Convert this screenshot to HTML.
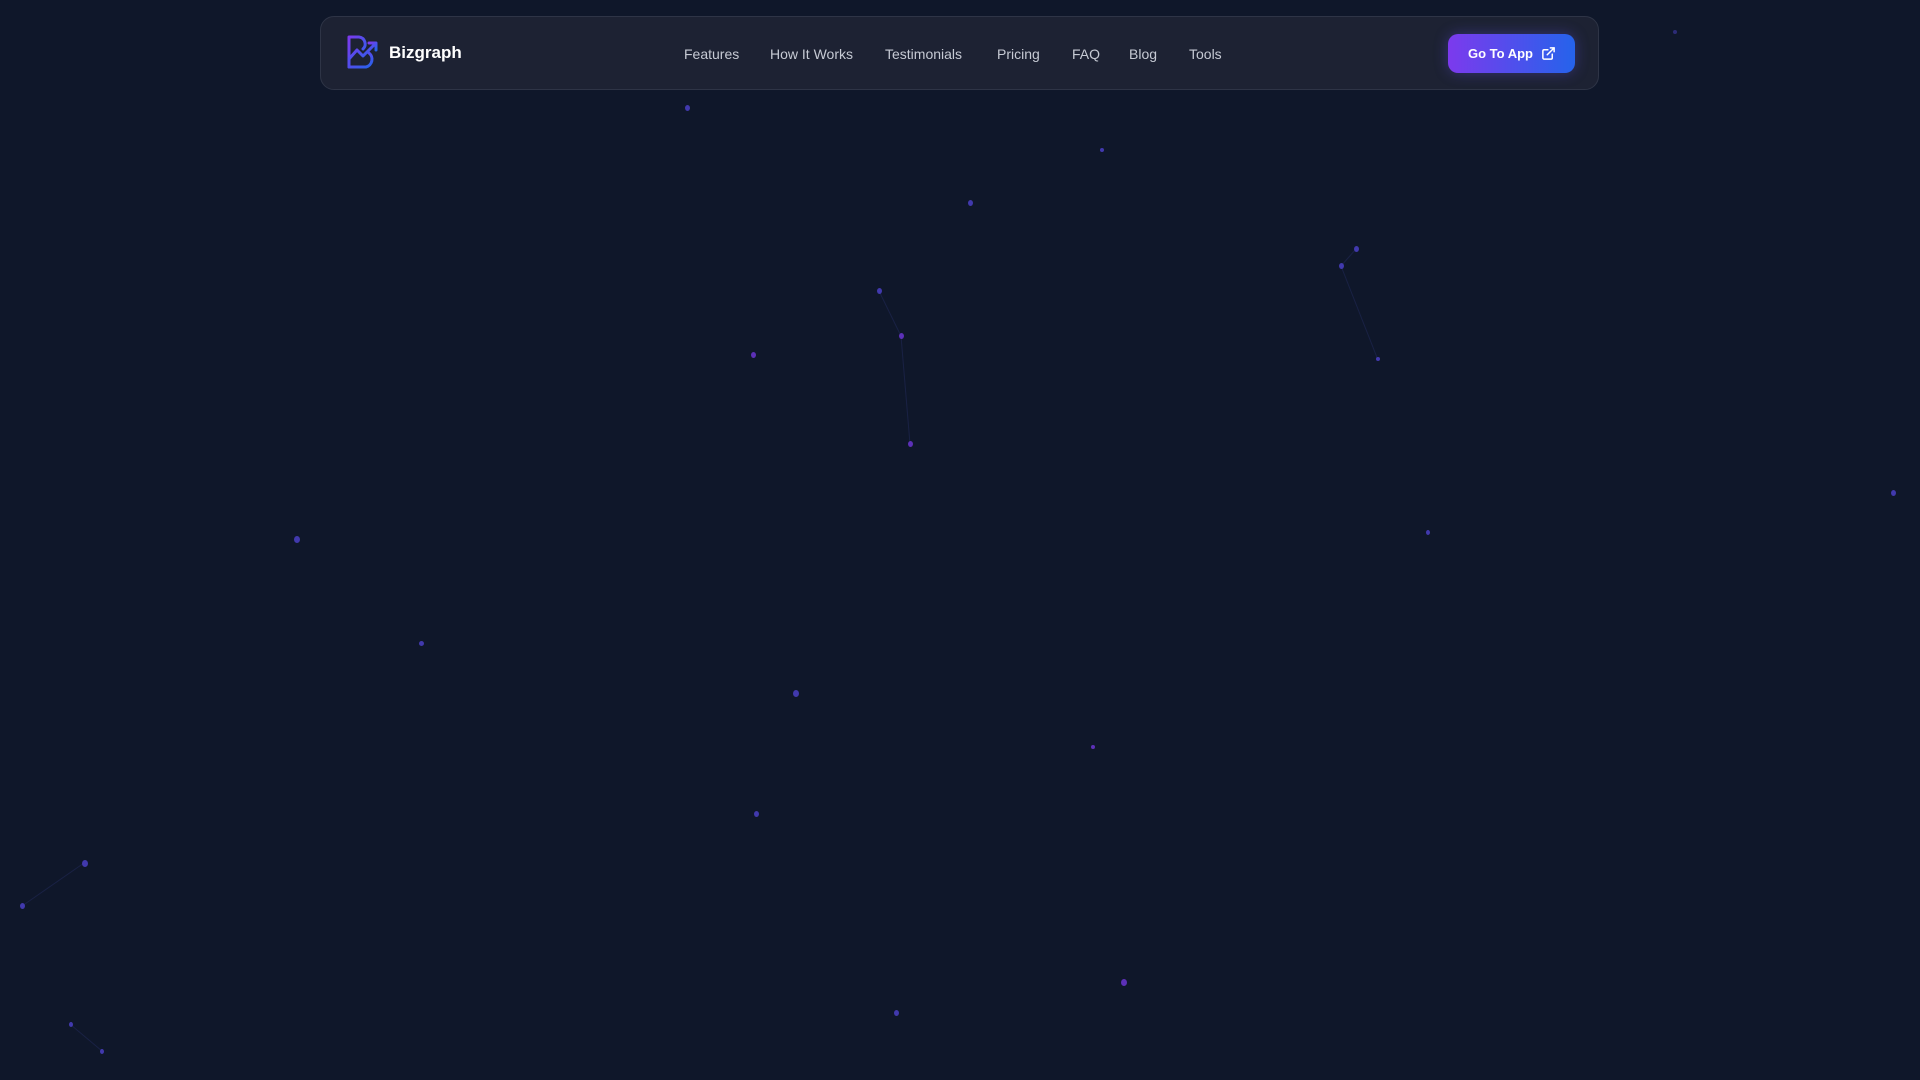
<!DOCTYPE html>
<html><head><meta charset="utf-8"><style>
html,body{margin:0;padding:0}
body{width:1920px;height:1080px;background:#0f172a;position:relative;overflow:hidden;font-family:"Liberation Sans",sans-serif}
.nav{position:absolute;left:320px;top:16px;width:1279px;height:74px;background:#1d2233;border:1px solid #2e3446;border-radius:14px;box-sizing:border-box}
.logo{position:absolute;left:26px;top:18px}
.brand{position:absolute;left:68px;top:26px;color:#fff;font-weight:bold;font-size:17px}
.link{position:absolute;top:29px;color:#c6cad4;font-size:14px}
.btn{position:absolute;left:1127px;top:17px;width:127px;height:39px;border-radius:10px;background:linear-gradient(90deg,#7c3aed,#2563eb);color:#fff;font-weight:bold;font-size:13px;box-shadow:0 0 14px rgba(99,82,240,.35)}
.btn span{position:absolute;left:20px;top:12px}
.btn svg{position:absolute;left:93px;top:12px}
.d{position:absolute;width:5px;height:6px;border-radius:50%;background:#4a3fc4;opacity:.85}
.p{background:#6a35d0}
</style></head><body>
<svg style="position:absolute;left:0;top:0" width="1920" height="1080">
<g stroke="#222a5a" stroke-width="1" opacity=".55">
<line x1="879" y1="291" x2="901" y2="336"/><line x1="901" y1="336" x2="910" y2="444"/>
<line x1="1356" y1="249" x2="1341" y2="266"/><line x1="1341" y1="266" x2="1378" y2="360"/>
<line x1="84" y1="863" x2="22" y2="906"/><line x1="71" y1="1025" x2="102" y2="1051"/>
</g></svg>
<div class="d" style="left:685px;top:105px"></div>
<div class="d" style="left:1100px;top:148px;width:4px;height:4px"></div>
<div class="d" style="left:968px;top:200px"></div>
<div class="d" style="left:877px;top:288px"></div>
<div class="d p" style="left:899px;top:333px"></div>
<div class="d p" style="left:908px;top:441px"></div>
<div class="d p" style="left:751px;top:352px"></div>
<div class="d" style="left:1354px;top:246px"></div>
<div class="d" style="left:1339px;top:263px"></div>
<div class="d" style="left:1376px;top:357px;width:4px;height:4px"></div>
<div class="d" style="left:1673px;top:30px;width:4px;height:4px;opacity:.5"></div>
<div class="d" style="left:1891px;top:490px"></div>
<div class="d" style="left:1426px;top:530px;width:4px;height:5px"></div>
<div class="d" style="left:294px;top:536px;width:6px;height:7px"></div>
<div class="d" style="left:419px;top:641px;width:5px;height:5px"></div>
<div class="d" style="left:793px;top:690px;width:6px;height:7px"></div>
<div class="d p" style="left:1091px;top:745px;width:4px;height:4px"></div>
<div class="d" style="left:754px;top:811px"></div>
<div class="d" style="left:82px;top:860px;width:6px;height:7px"></div>
<div class="d" style="left:20px;top:903px"></div>
<div class="d" style="left:69px;top:1022px;width:4px;height:5px"></div>
<div class="d" style="left:100px;top:1049px;width:4px;height:5px"></div>
<div class="d p" style="left:1121px;top:979px;width:6px;height:7px"></div>
<div class="d" style="left:894px;top:1010px;width:5px;height:6px"></div>
<div class="nav">
<svg class="logo" width="36" height="36" viewBox="0 0 36 36">
<defs><linearGradient id="g" x1="0" y1="0" x2="1" y2="1"><stop offset="0" stop-color="#7c3aed"/><stop offset="1" stop-color="#2563eb"/></linearGradient></defs>
<g fill="none" stroke="url(#g)" stroke-width="3" stroke-linecap="round" stroke-linejoin="round">
<path d="M2 32 V2 H12 A7 7 0 0 1 16 14"/>
<path d="M2 32 H19 A8 8 0 0 0 22 18"/>
<path d="M2 24 L10 15 L16 21 L28 9"/>
<path d="M22 8 H29 V15"/>
</g></svg>
<div class="brand">Bizgraph</div>
<div class="link" style="left:363px">Features</div>
<div class="link" style="left:449px">How It Works</div>
<div class="link" style="left:564px">Testimonials</div>
<div class="link" style="left:676px">Pricing</div>
<div class="link" style="left:751px">FAQ</div>
<div class="link" style="left:808px">Blog</div>
<div class="link" style="left:868px">Tools</div>
<div class="btn"><span>Go To App</span>
<svg width="15" height="15" viewBox="0 0 24 24" fill="none" stroke="#fff" stroke-width="2.4" stroke-linecap="round" stroke-linejoin="round"><path d="M18 13v6a2 2 0 0 1-2 2H5a2 2 0 0 1-2-2V8a2 2 0 0 1 2-2h6"/><path d="M15 3h6v6"/><path d="M10 14L21 3"/></svg>
</div>
</div>
</body></html>
